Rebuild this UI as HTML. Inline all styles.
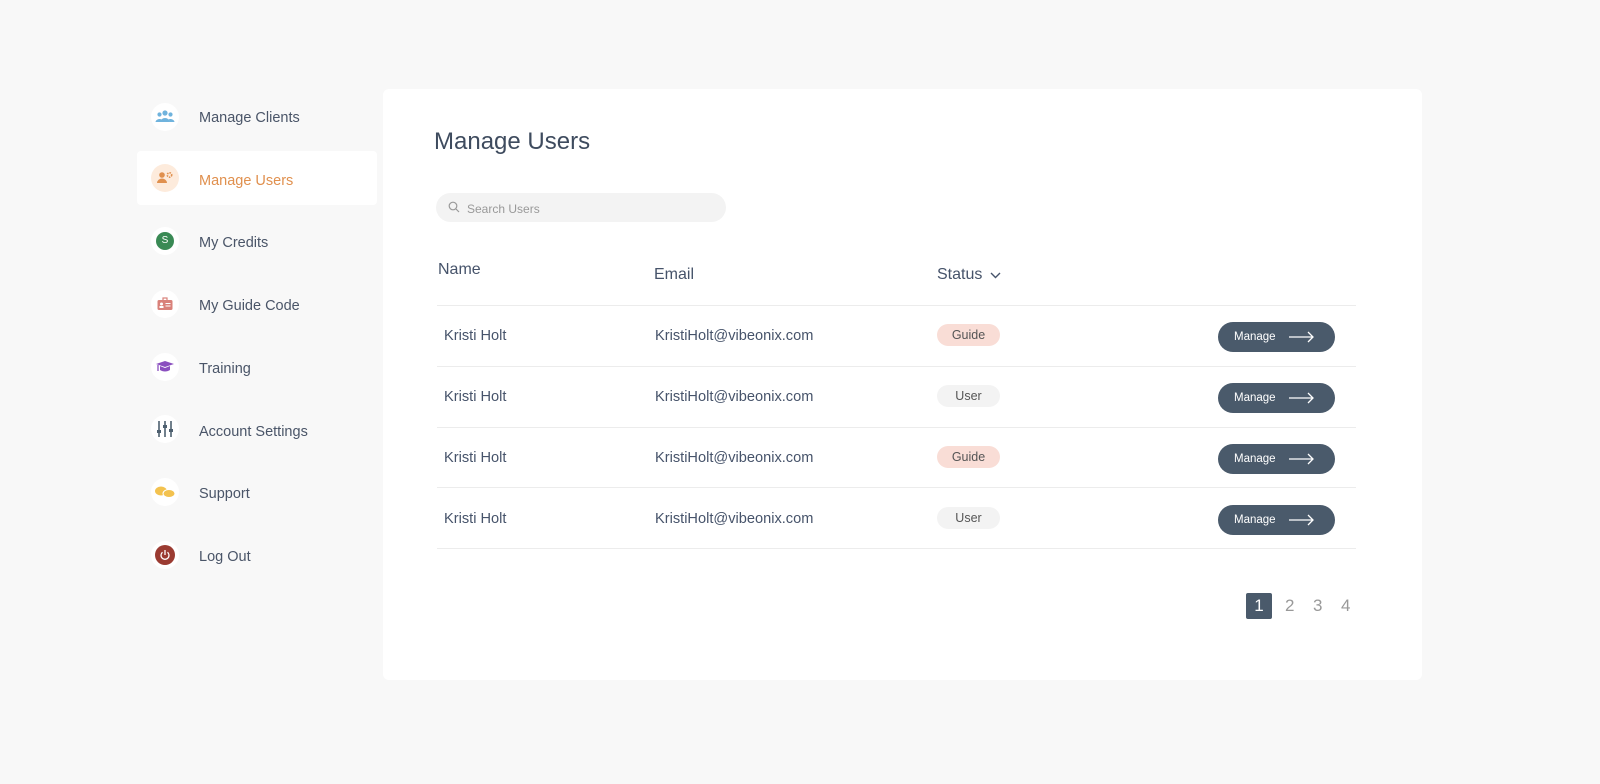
<!DOCTYPE html>
<html><head><style>
*{margin:0;padding:0;box-sizing:border-box}
body{width:1600px;height:784px;background:#f8f8f8;font-family:"Liberation Sans",sans-serif;color:#46536a;position:relative;overflow:hidden}
.a{position:absolute}
.nav{position:absolute;left:199px;font-size:14.5px;color:#4a5568;transform:translateY(-50%);white-space:nowrap}
.ic{position:absolute;left:151px;width:28px;height:28px;border-radius:50%;background:#fff;transform:translateY(-50%);display:flex;align-items:center;justify-content:center}
.card{left:383px;top:89px;width:1039px;height:591px;background:#fff;border-radius:6px}
.line{position:absolute;left:437px;width:919px;height:1px;background:#ececec}
.cell{position:absolute;font-size:14.6px;color:#46536a;transform:translateY(-50%);white-space:nowrap}
.badge{position:absolute;left:937px;width:63px;height:22px;border-radius:11px;font-size:12.5px;text-align:center;line-height:22px;color:#555;transform:translateY(-50%)}
.btn{position:absolute;left:1218px;width:117px;height:30px;border-radius:15px;background:#4a5a6b;color:#fff;font-size:11.5px;transform:translateY(-50%);padding-left:16px;line-height:30px}
.btn svg{position:absolute;right:20px;top:9px}
.pg{position:absolute;top:596px;font-size:17px;color:#999}
</style></head><body>
<div class="a" style="left:137px;top:151px;width:240px;height:54px;background:#fff;border-radius:4px"></div>

<div class="ic" style="top:117px"><svg width="20" height="14" viewBox="0 0 20 14"><circle cx="10" cy="3" r="2.6" fill="#6fb3dd"/><circle cx="4.5" cy="4.5" r="2.1" fill="#6fb3dd"/><circle cx="15.5" cy="4.5" r="2.1" fill="#6fb3dd"/><path d="M5.5 12a4.5 4 0 0 1 9 0z M0.5 12a4 3.5 0 0 1 6 -2.5 5 4 0 0 0 -1 2.5z M19.5 12a4 3.5 0 0 0 -6 -2.5 5 4 0 0 1 1 2.5z" fill="#6fb3dd"/></svg></div>
<div class="nav" style="top:118px">Manage Clients</div>

<div class="ic" style="top:178px;background:#fdebdc"><svg width="18" height="14" viewBox="0 0 18 14"><circle cx="6" cy="4" r="2.8" fill="#e0904e"/><path d="M1 12a5 4.5 0 0 1 10 0z" fill="#e0904e"/><circle cx="13.5" cy="4" r="2.2" fill="none" stroke="#e0904e" stroke-width="1.6" stroke-dasharray="1.5 1"/></svg></div>
<div class="nav" style="top:181px;color:#e0904e">Manage Users</div>

<div class="ic" style="top:241px"><div style="width:18px;height:18px;border-radius:50%;background:#3a8a55;color:#fff;font-size:10px;text-align:center;line-height:18px">S</div></div>
<div class="nav" style="top:243px">My Credits</div>

<div class="ic" style="top:304px"><svg width="16" height="14" viewBox="0 0 16 14"><rect x="6" y="1" width="4" height="3" fill="none" stroke="#d9817a" stroke-width="1.2"/><rect x="0.5" y="3" width="15" height="10" rx="1.5" fill="#d9817a"/><circle cx="4.5" cy="7" r="1.5" fill="#fff"/><rect x="2.5" y="9" width="4" height="2" fill="#fff"/><rect x="8.5" y="6" width="5" height="1" fill="#fff"/><rect x="8.5" y="8.5" width="5" height="1" fill="#fff"/></svg></div>
<div class="nav" style="top:306px">My Guide Code</div>

<div class="ic" style="top:367px"><svg width="20" height="14" viewBox="0 0 20 14"><path d="M1 4 10 1 19 4 10 7z" fill="#8a4fbf"/><path d="M5 6v4c3 2 7 2 10 0V6l-5 2z" fill="#8a4fbf"/><path d="M3 5v6" stroke="#8a4fbf" stroke-width="1.3"/></svg></div>
<div class="nav" style="top:369px">Training</div>

<div class="ic" style="top:429px"><svg width="18" height="18" viewBox="0 0 18 18"><g stroke="#4e6070" stroke-width="1.6"><path d="M3 1v16M9 1v16M15 1v16"/></g><g fill="#4e6070"><rect x="1" y="10" width="4" height="3"/><rect x="7" y="5" width="4" height="3"/><rect x="13" y="9" width="4" height="3"/></g></svg></div>
<div class="nav" style="top:432px">Account Settings</div>

<div class="ic" style="top:492px"><svg width="22" height="14" viewBox="0 0 22 14"><ellipse cx="7" cy="6" rx="6" ry="4.5" fill="#f3c24f"/><ellipse cx="15" cy="8.5" rx="6" ry="4" fill="#f3c24f" stroke="#fff" stroke-width="1"/></svg></div>
<div class="nav" style="top:494px">Support</div>

<div class="ic" style="top:555px"><div style="width:20px;height:20px;border-radius:50%;background:#9b3b32;display:flex;align-items:center;justify-content:center"><svg width="12" height="12" viewBox="0 0 12 12"><path d="M3.5 3.2a4 4 0 1 0 5 0" fill="none" stroke="#fff" stroke-width="1.3"/><path d="M6 1v5" stroke="#fff" stroke-width="1.3"/></svg></div></div>
<div class="nav" style="top:557px">Log Out</div>

<div class="a card"></div>
<div class="a" style="left:434px;top:128px;font-size:24px;color:#3e4b5e">Manage Users</div>
<div class="a" style="left:436px;top:193px;width:290px;height:29px;border-radius:15px;background:#f3f3f3"></div>
<svg class="a" style="left:448px;top:201px" width="12" height="12" viewBox="0 0 12 12"><circle cx="5" cy="5" r="3.8" fill="none" stroke="#999" stroke-width="1.2"/><path d="M8 8l3 3" stroke="#999" stroke-width="1.2"/></svg>
<div class="a" style="left:467px;top:202px;font-size:12px;color:#999">Search Users</div>

<div class="cell" style="left:438px;top:270px;font-size:16px">Name</div>
<div class="cell" style="left:654px;top:275px;font-size:16px">Email</div>
<div class="cell" style="left:937px;top:275px;font-size:16px">Status <svg width="11" height="7" viewBox="0 0 11 7" style="margin-left:3px"><path d="M1 1l4.5 4.5L10 1" fill="none" stroke="#46536a" stroke-width="1.4"/></svg></div>

<div class="line" style="top:305px"></div>
<div class="line" style="top:366px"></div>
<div class="line" style="top:427px"></div>
<div class="line" style="top:487px"></div>
<div class="line" style="top:548px"></div>

<div class="cell" style="left:444px;top:336px">Kristi Holt</div><div class="cell" style="left:655px;top:336px">KristiHolt@vibeonix.com</div><div class="badge" style="top:335px;background:#f9ddd6">Guide</div><div class="btn" style="top:337px">Manage<svg width="26" height="12" viewBox="0 0 26 12"><path d="M0 6h24M19 1l5 5-5 5" fill="none" stroke="#fff" stroke-width="1.3"/></svg></div>
<div class="cell" style="left:444px;top:397px">Kristi Holt</div><div class="cell" style="left:655px;top:397px">KristiHolt@vibeonix.com</div><div class="badge" style="top:396px;background:#f3f3f3">User</div><div class="btn" style="top:398px">Manage<svg width="26" height="12" viewBox="0 0 26 12"><path d="M0 6h24M19 1l5 5-5 5" fill="none" stroke="#fff" stroke-width="1.3"/></svg></div>
<div class="cell" style="left:444px;top:458px">Kristi Holt</div><div class="cell" style="left:655px;top:458px">KristiHolt@vibeonix.com</div><div class="badge" style="top:457px;background:#f9ddd6">Guide</div><div class="btn" style="top:459px">Manage<svg width="26" height="12" viewBox="0 0 26 12"><path d="M0 6h24M19 1l5 5-5 5" fill="none" stroke="#fff" stroke-width="1.3"/></svg></div>
<div class="cell" style="left:444px;top:519px">Kristi Holt</div><div class="cell" style="left:655px;top:519px">KristiHolt@vibeonix.com</div><div class="badge" style="top:518px;background:#f3f3f3">User</div><div class="btn" style="top:520px">Manage<svg width="26" height="12" viewBox="0 0 26 12"><path d="M0 6h24M19 1l5 5-5 5" fill="none" stroke="#fff" stroke-width="1.3"/></svg></div>

<div class="a" style="left:1246px;top:593px;width:26px;height:26px;background:#4a5a6b;border-radius:2px;color:#fff;font-size:17px;text-align:center;line-height:26px">1</div>
<div class="pg" style="left:1285px">2</div>
<div class="pg" style="left:1313px">3</div>
<div class="pg" style="left:1341px">4</div>
</body></html>
